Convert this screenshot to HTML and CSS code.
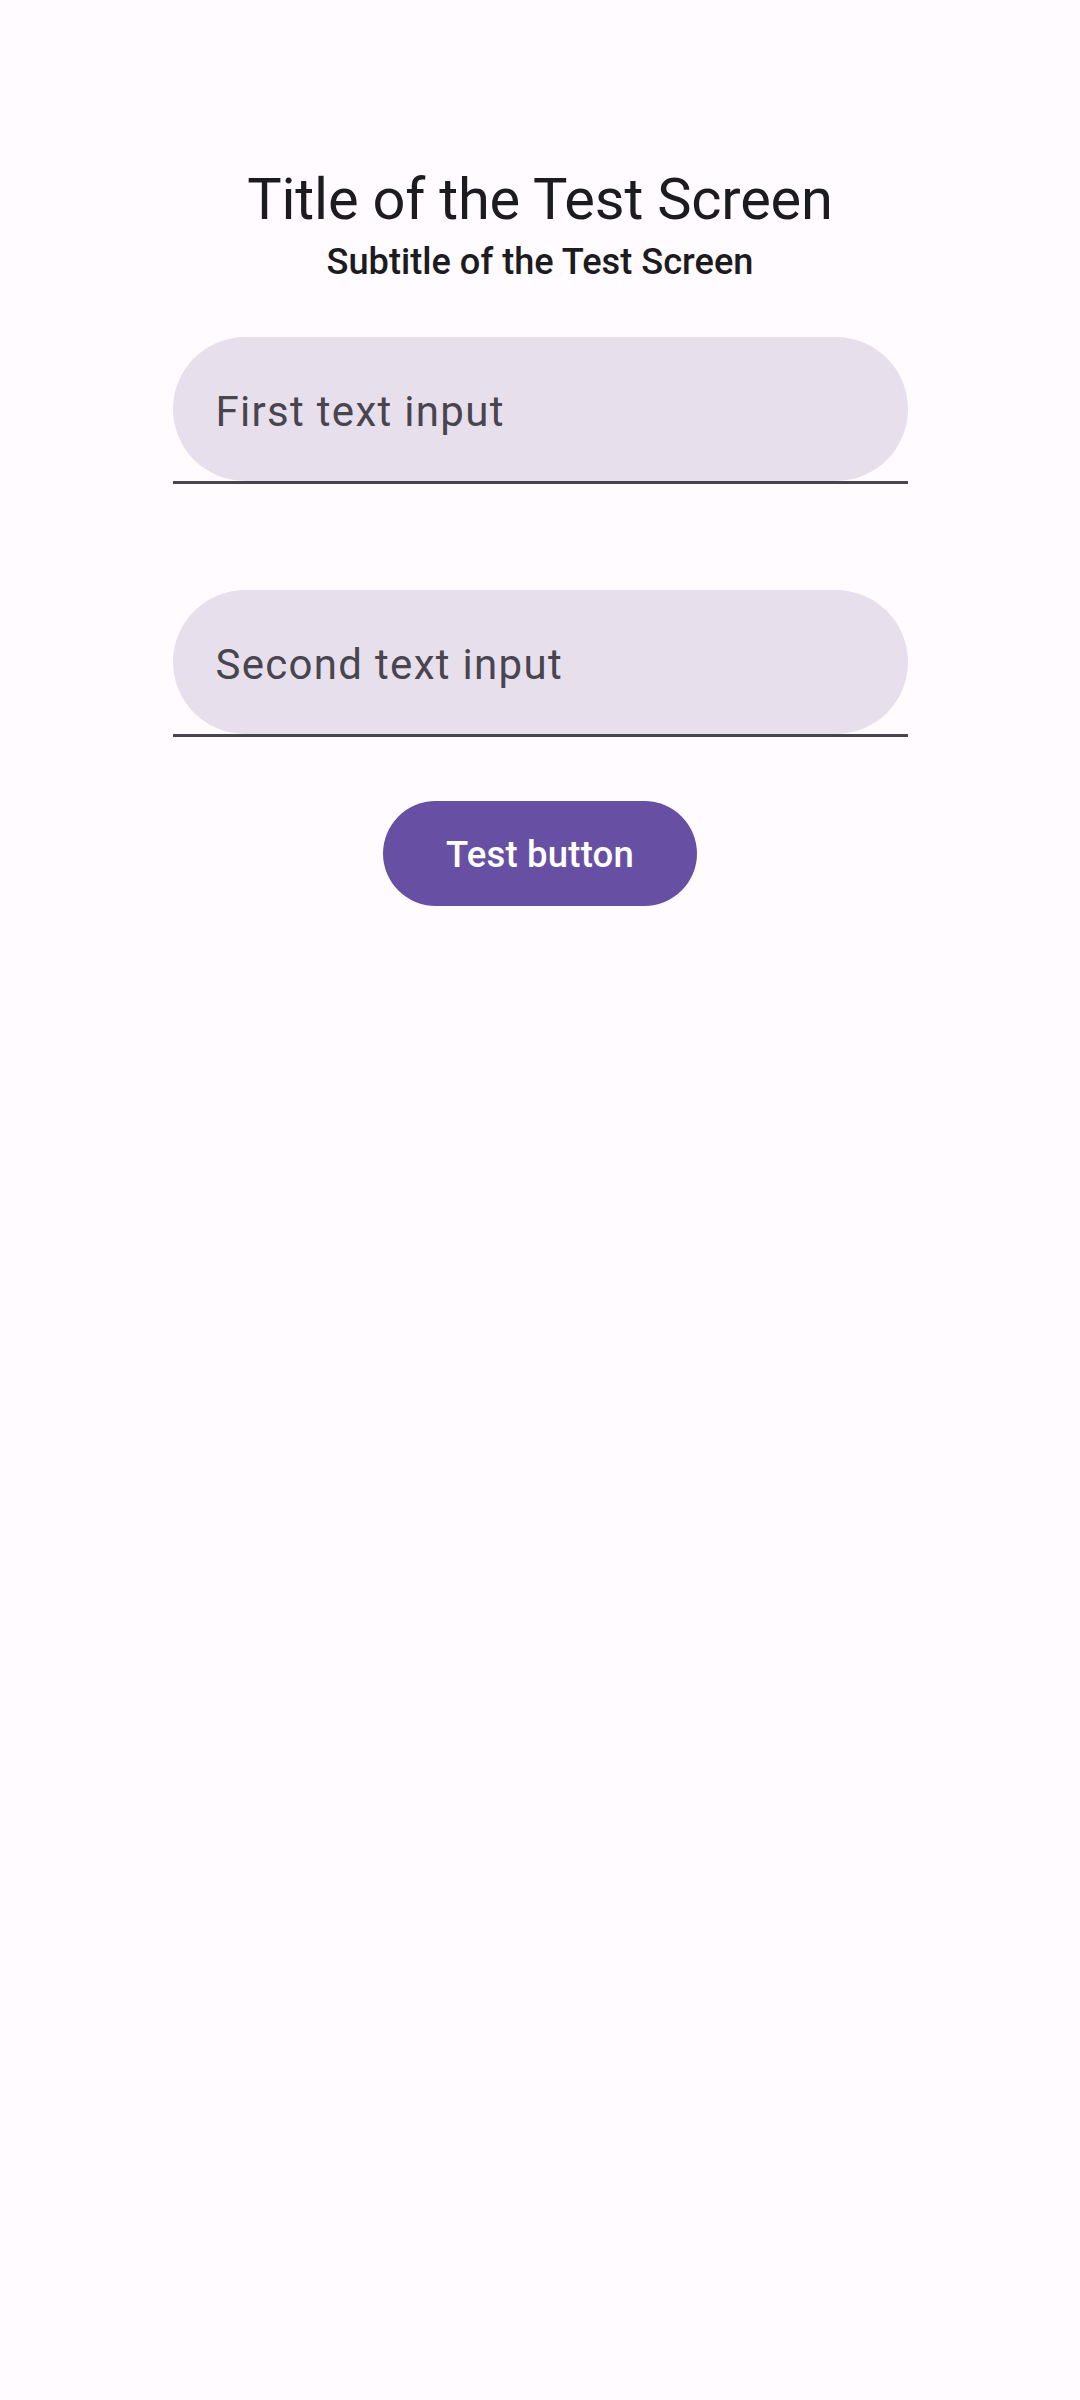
FILE: index.html
```html
<!DOCTYPE html>
<html>
<head>
<meta charset="utf-8">
<link rel="stylesheet" href="styles.css">
</head>
<body>
<main class="screen">
  <h1 class="title">Title of the Test Screen</h1>
  <h2 class="subtitle">Subtitle of the Test Screen</h2>
  <div class="field field-first">
    <div class="field-box"><span class="field-label">First text input</span></div>
    <div class="field-line"></div>
  </div>
  <div class="field field-second">
    <div class="field-box"><span class="field-label">Second text input</span></div>
    <div class="field-line"></div>
  </div>
  <button class="btn">Test button</button>
</main>
</body>
</html>
```
FILE: styles.css
```css
html, body {
  margin: 0;
  padding: 0;
  background: #FFFBFE;
}
body {
  width: 1080px;
  height: 2400px;
  font-family: Roboto, "Noto Sans", sans-serif;
}
.screen {
  display: flex;
  flex-direction: column;
  align-items: center;
  padding-top: 163px;
}
.title {
  margin: 0;
  font-size: 57.75px;
  font-weight: 400;
  line-height: 73.5px;
  letter-spacing: -0.2px;
  color: #1C1B1F;
}
.subtitle {
  margin: -1px 0 0;
  font-size: 36.2px;
  font-weight: 500;
  line-height: 52.5px;
  letter-spacing: 0;
  color: #1C1B1F;
}
.field {
  width: 735px;
  display: flex;
  flex-direction: column;
}
.field-first {
  margin-top: 49px;
}
.field-second {
  margin-top: 106px;
}
.field-box {
  height: 144px;
  background: #E7E0EC;
  border-radius: 72px;
  display: flex;
  align-items: center;
  padding: 5px 0 0 43px;
  box-sizing: border-box;
}
.field-label {
  font-size: 42px;
  line-height: 63px;
  letter-spacing: 1.3px;
  color: #49454F;
}
.field-line {
  height: 3px;
  background: #49454F;
}
.btn {
  margin-top: 64px;
  height: 105px;
  padding: 3px 63px 0;
  border: none;
  border-radius: 52.5px;
  background: #6750A4;
  color: #FFFFFF;
  font-family: Roboto, "Noto Sans", sans-serif;
  font-size: 36.5px;
  font-weight: 500;
  letter-spacing: 0.2px;
  line-height: 52.5px;
}
```
